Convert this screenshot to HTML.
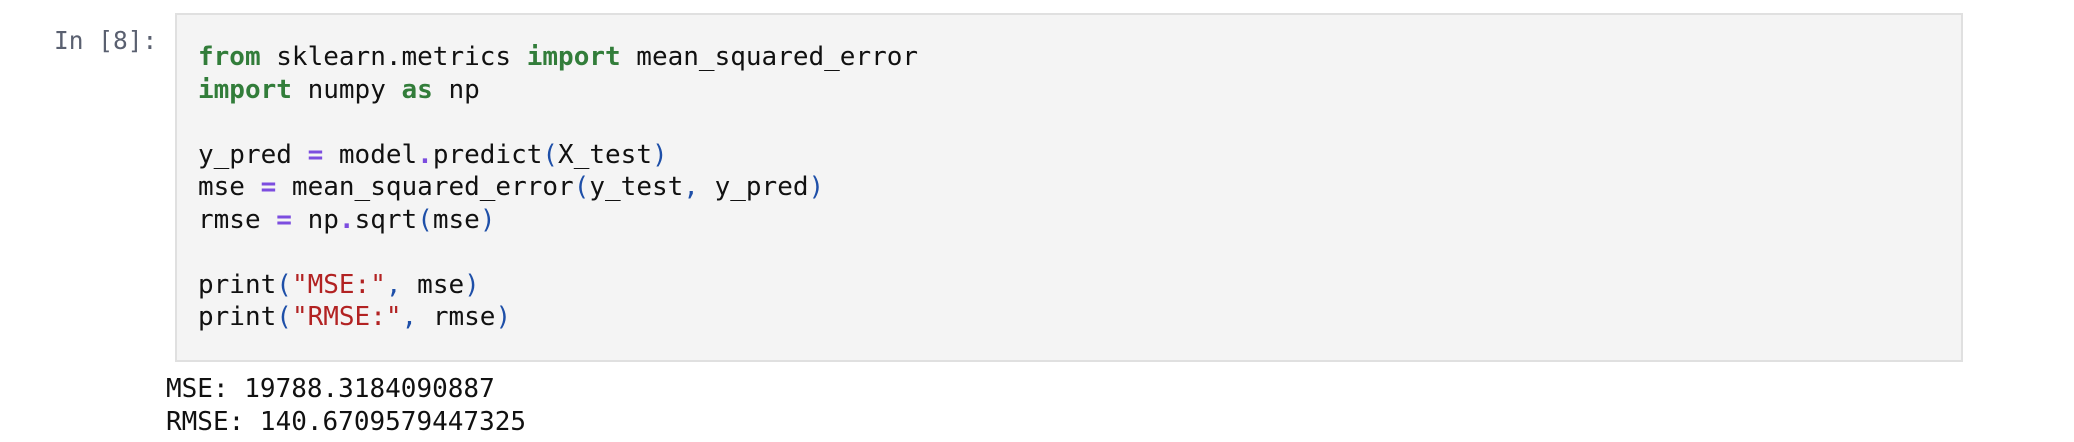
<!DOCTYPE html>
<html><head><style>
html,body{margin:0;padding:0;background:#fff;width:2074px;height:442px;overflow:hidden}
.mono{font-family:"DejaVu Sans Mono","Liberation Mono",monospace}
.prompt{position:absolute;left:54px;top:25px;font-size:24.5px;color:#5a6070;line-height:32px;white-space:pre}
.box{position:absolute;left:175px;top:13px;width:1784px;height:345px;background:#f4f4f4;border:2px solid #e0e0e0}
pre{margin:0;position:absolute;left:198px;top:41px;font-size:26px;line-height:32.5px;color:#111}
.k{color:#327d3a;font-weight:bold}
.o{color:#7c4ddf;font-weight:bold}
.p{color:#1e4fa8}
.s{color:#b22222}
.out{position:absolute;left:166px;top:373px;font-size:26px;line-height:32.5px;color:#111;margin:0}
</style></head><body>
<div class="prompt mono">In [8]:</div>
<div class="box"></div>
<pre class="mono"><span class="k">from</span> sklearn.metrics <span class="k">import</span> mean_squared_error
<span class="k">import</span> numpy <span class="k">as</span> np

y_pred <span class="o">=</span> model<span class="o">.</span>predict<span class="p">(</span>X_test<span class="p">)</span>
mse <span class="o">=</span> mean_squared_error<span class="p">(</span>y_test<span class="p">,</span> y_pred<span class="p">)</span>
rmse <span class="o">=</span> np<span class="o">.</span>sqrt<span class="p">(</span>mse<span class="p">)</span>

print<span class="p">(</span><span class="s">"MSE:"</span><span class="p">,</span> mse<span class="p">)</span>
print<span class="p">(</span><span class="s">"RMSE:"</span><span class="p">,</span> rmse<span class="p">)</span></pre>
<pre class="out mono">MSE: 19788.3184090887
RMSE: 140.6709579447325</pre>
</body></html>
